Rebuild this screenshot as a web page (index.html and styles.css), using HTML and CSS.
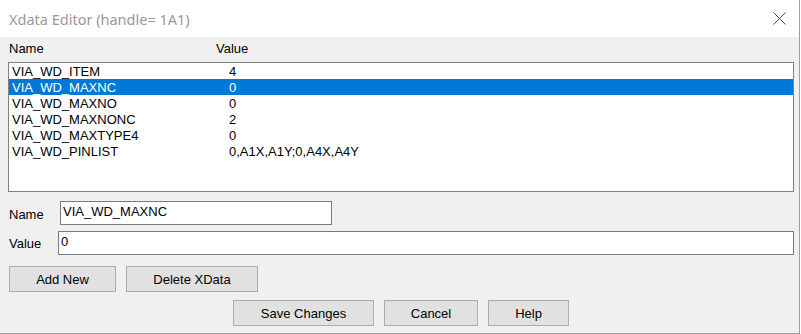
FILE: index.html
```html
<!DOCTYPE html>
<html>
<head>
<meta charset="utf-8">
<link rel="stylesheet" href="styles.css">
</head>
<body>
<div class="window">
  <div class="titlebar">
    <span class="title">Xdata Editor (handle= 1A1)</span>
    <svg class="close" width="13" height="13" viewBox="0 0 13 13"><path d="M0.5 0.5 L12.5 12.5 M12.5 0.5 L0.5 12.5" stroke="#4a4a4a" stroke-width="1" fill="none"/></svg>
  </div>
  <div class="content">
    <div class="list-header"><span class="col-name">Name</span><span>Value</span></div>
    <div class="list">
      <div class="row"><span class="cell-name">VIA_WD_ITEM</span><span>4</span></div>
      <div class="row selected"><span class="cell-name">VIA_WD_MAXNC</span><span>0</span></div>
      <div class="row"><span class="cell-name">VIA_WD_MAXNO</span><span>0</span></div>
      <div class="row"><span class="cell-name">VIA_WD_MAXNONC</span><span>2</span></div>
      <div class="row"><span class="cell-name">VIA_WD_MAXTYPE4</span><span>0</span></div>
      <div class="row"><span class="cell-name">VIA_WD_PINLIST</span><span>0,A1X,A1Y;0,A4X,A4Y</span></div>
    </div>
    <div class="form-row name-row"><span class="label name-label">Name</span><div class="field name-field">VIA_WD_MAXNC</div></div>
    <div class="form-row value-row"><span class="label value-label">Value</span><div class="field value-field">0</div></div>
    <div class="btn-row">
      <button class="btn btn-add">Add New</button>
      <button class="btn btn-delete">Delete XData</button>
    </div>
    <div class="btn-row btn-row-bottom">
      <button class="btn btn-save">Save Changes</button>
      <button class="btn btn-cancel">Cancel</button>
      <button class="btn btn-help">Help</button>
    </div>
  </div>
</div>
</body>
</html>
```
FILE: styles.css
```css
html, body {
  margin: 0;
  padding: 0;
  background: #ffffff;
}
body {
  width: 801px;
  height: 334px;
  overflow: hidden;
  font-family: "Liberation Sans", Arial, sans-serif;
  font-size: 13px;
  color: #000;
}
.window {
  width: 799px;
  height: 333px;
  border-right: 1px solid #a0a0a0;
  border-bottom: 1px solid #a0a0a0;
  display: flex;
  flex-direction: column;
}
.titlebar {
  flex: none;
  height: 37px;
  box-sizing: border-box;
  background: #fff;
  display: flex;
  align-items: center;
  justify-content: space-between;
  padding: 0 13px 0 9px;
}
.title {
  font-family: "Noto Sans", "Open Sans", sans-serif;
  font-size: 14.5px;
  color: #999999;
  line-height: 20px;
}
.close {
  display: block;
}
.content {
  flex: 1;
  background: #f0f0f0;
}
.list-header {
  display: flex;
  height: 25px;
  box-sizing: border-box;
  padding: 4px 0 0 9px;
  line-height: 15px;
}
.col-name {
  width: 207px;
}
.list {
  margin-left: 8px;
  width: 786px;
  height: 130px;
  box-sizing: border-box;
  border: 1px solid #828282;
  background: #fff;
}
.row {
  display: flex;
  height: 16px;
  box-sizing: border-box;
  padding-top: 2px;
  line-height: 14px;
  white-space: nowrap;
}
.cell-name {
  width: 217px;
  padding-left: 3px;
}
.selected {
  background: #0078d7;
  color: #fff;
}
.form-row {
  display: flex;
  align-items: flex-start;
  padding-left: 9px;
}
.label {
  padding-top: 6px;
  line-height: 15px;
}
.name-row {
  margin-top: 9px;
}
.name-label {
  width: 51px;
}
.value-row {
  margin-top: 6px;
}
.value-label {
  width: 49px;
  padding-top: 5px;
}
.field {
  height: 24px;
  box-sizing: border-box;
  border: 1px solid #7a7a7a;
  background: #fff;
  padding: 2px 2px 0;
  line-height: 15px;
}
.name-field {
  width: 272px;
}
.value-field {
  width: 736px;
}
.btn-row {
  display: flex;
  gap: 10px;
  padding-left: 9px;
  margin-top: 11px;
}
.btn-row-bottom {
  margin-top: 8px;
  padding-left: 233px;
}
.btn {
  height: 26px;
  box-sizing: border-box;
  border: 1px solid #adadad;
  background: #e1e1e1;
  font-family: inherit;
  font-size: 13px;
  line-height: 15px;
  color: #000;
  padding: 1px 0 0;
  margin: 0;
}
.btn-add { width: 107px; }
.btn-delete { width: 132px; }
.btn-save { width: 141px; }
.btn-cancel { width: 94px; }
.btn-help { width: 81px; }
```
